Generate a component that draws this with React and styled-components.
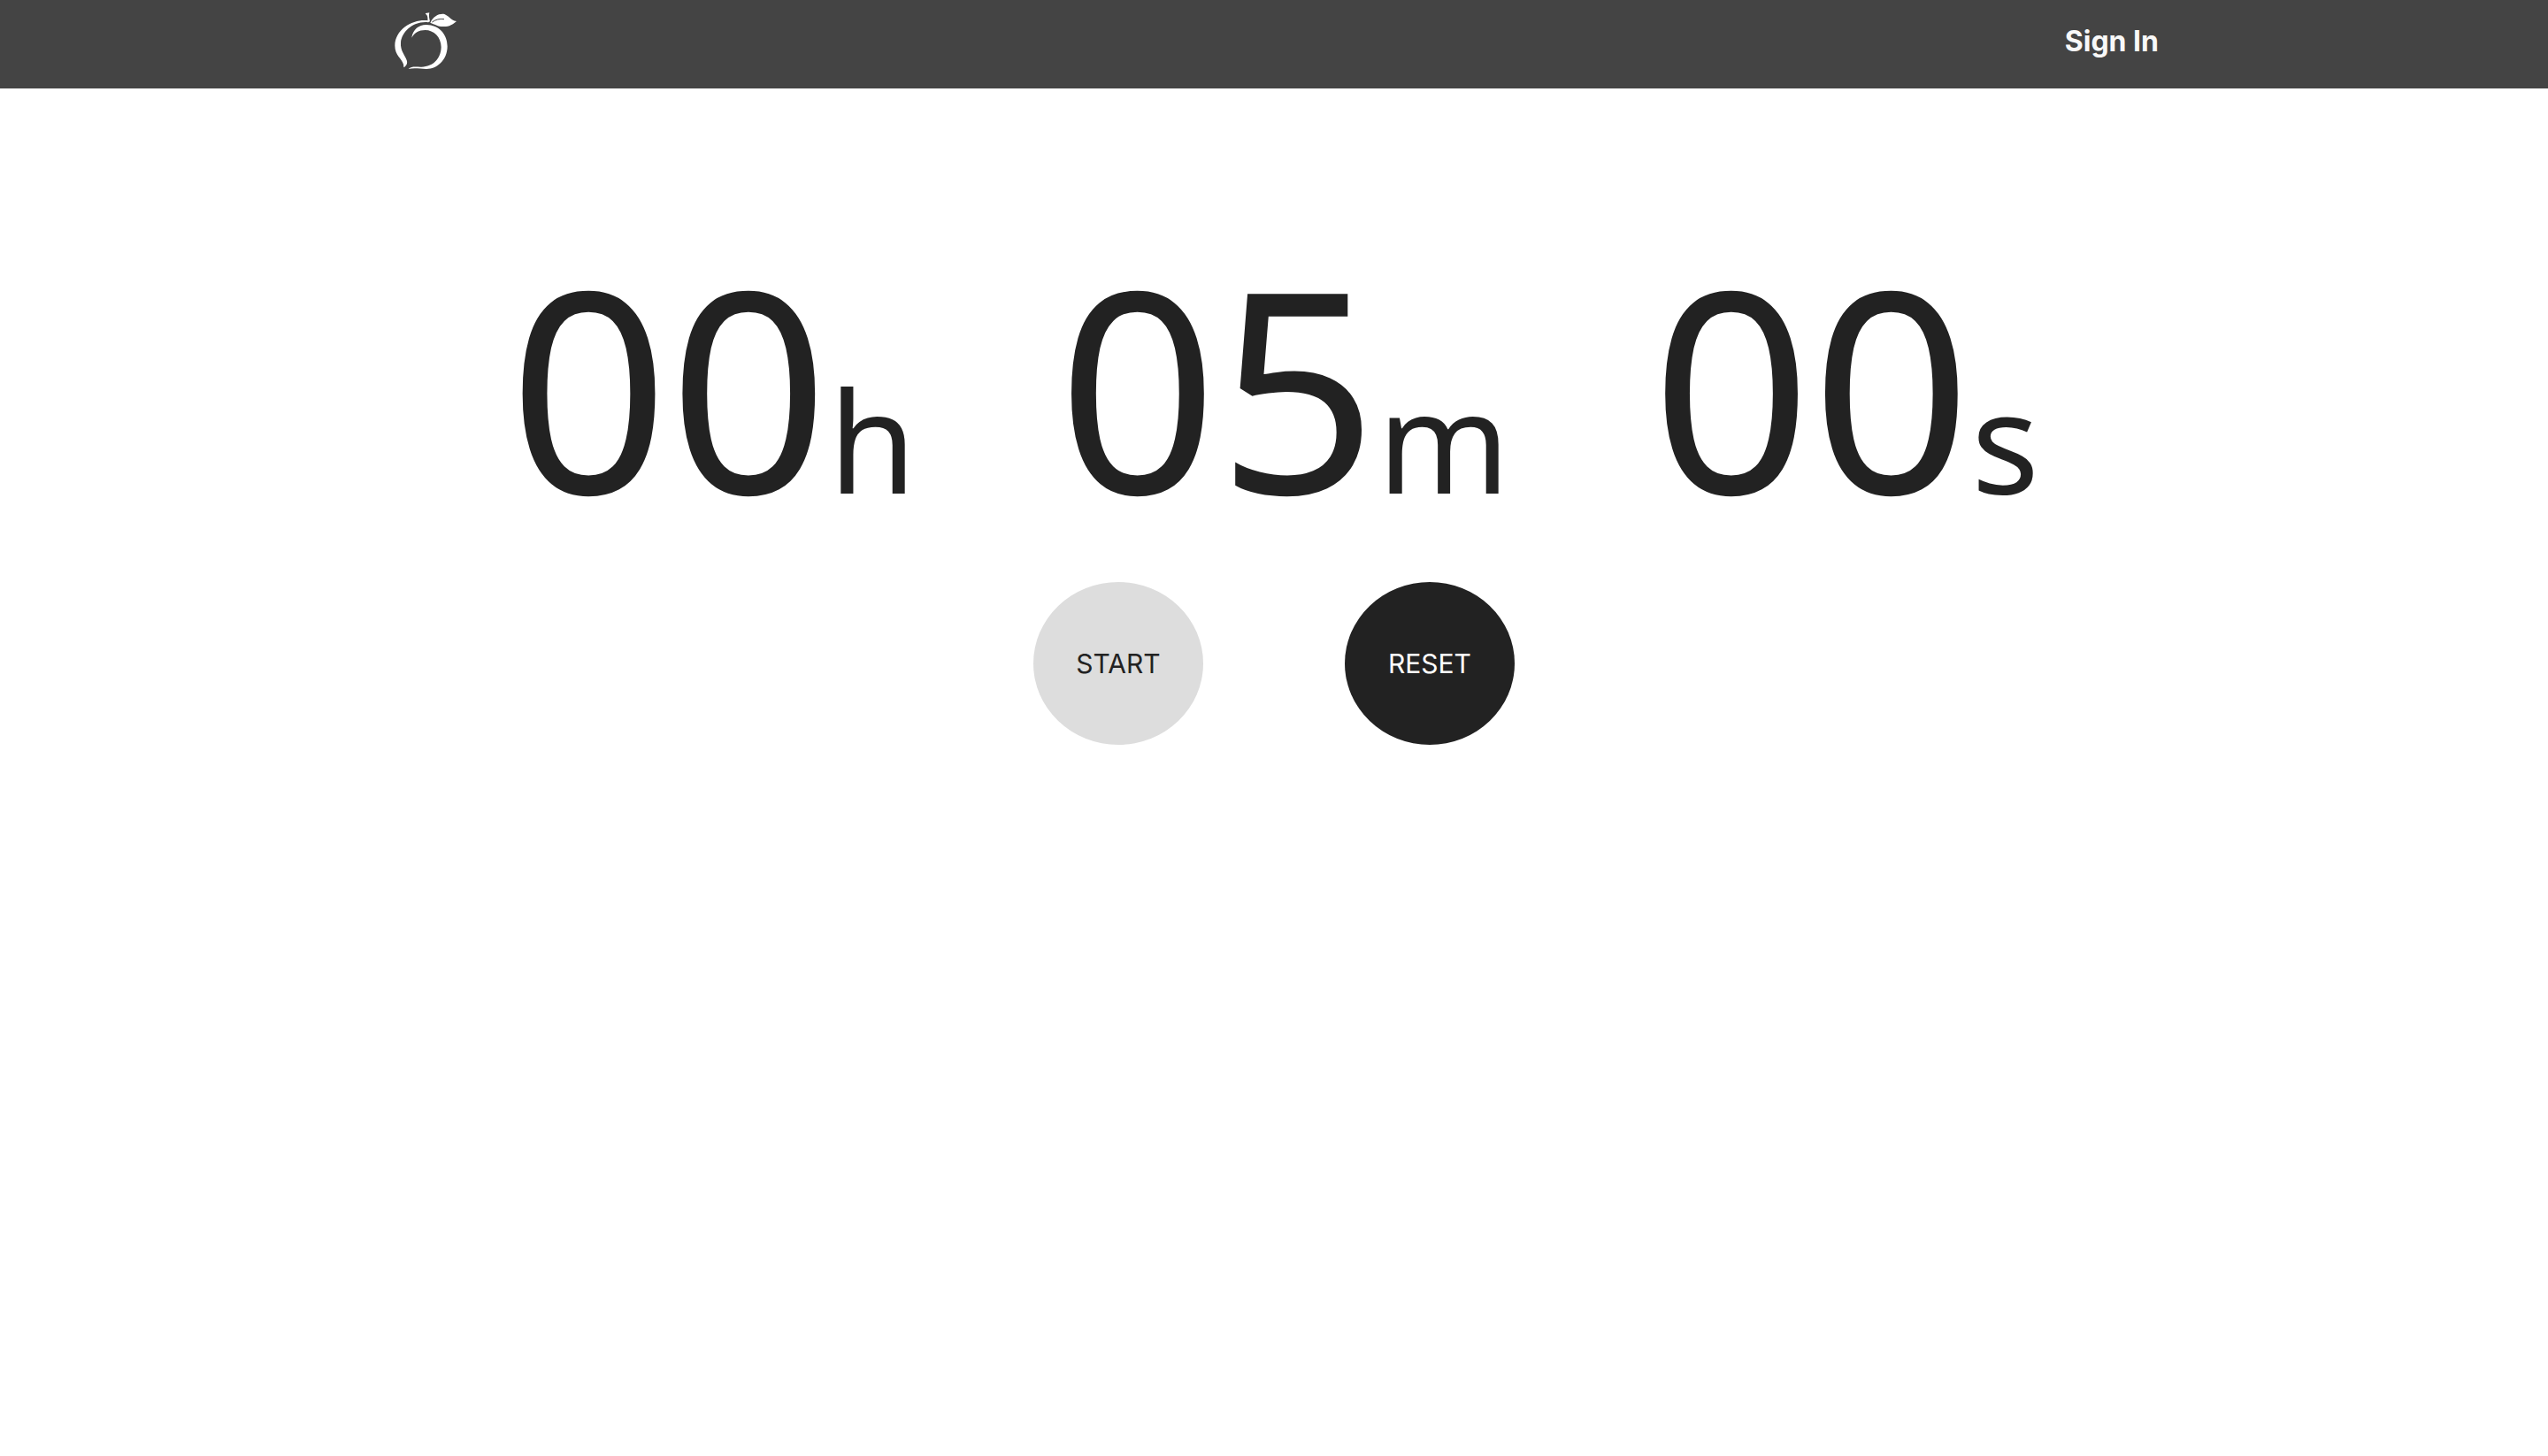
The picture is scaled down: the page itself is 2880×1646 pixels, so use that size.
import React, { useEffect, useState } from "react";
import styled, { createGlobalStyle } from "styled-components";

const START_SECONDS = 300;

const GlobalStyle = createGlobalStyle`
  *, *::before, *::after { box-sizing: border-box; }
  body {
    margin: 0;
    background: #fff;
    color: #222;
    font-family: Inter, "Liberation Sans", sans-serif;
  }
`;

const Header = styled.header`
  padding: 12px 40px 18px;
  background: #444;
`;

const Nav = styled.nav`
  display: flex;
  align-items: center;
  justify-content: space-between;
  max-width: 2000px;
  margin: 0 auto;
`;

const HomeLink = styled.a`
  display: block;
  color: #fff;
`;

const Logo = styled.svg`
  display: block;
  width: 80px;
  height: 70px;
`;

const SignInLink = styled.a`
  color: #f8f8f8;
  font: 700 32px/40px Inter, sans-serif;
  text-decoration: none;
`;

const Main = styled.main`
  display: flex;
  flex-direction: column;
  align-items: center;
  gap: 60px;
  padding-top: 174px;
`;

const Clock = styled.div`
  display: flex;
  gap: 160px;
  font-family: "Noto Sans", sans-serif;
  font-size: 316px;
  line-height: 324px;
`;

const Segment = styled.div`
  display: flex;
  align-items: baseline;
`;

const Unit = styled.span`
  font-size: 160px;
  line-height: 160px;
`;

const Controls = styled.div`
  display: flex;
  gap: 160px;
`;

const RoundButton = styled.button`
  width: 192px;
  height: 184px;
  padding: 0;
  border: 0;
  border-radius: 50%;
  background: ${({ $dark }) => ($dark ? "#222" : "#ddd")};
  color: ${({ $dark }) => ($dark ? "#fff" : "#222")};
  font: 400 30px/40px Inter, sans-serif;
  cursor: pointer;
`;

const pad = (value) => String(value).padStart(2, "0");

function PeachLogo() {
  return (
    <Logo viewBox="30 36 240 210" fill="currentColor" aria-hidden="true">
      <path d="M163 70C118 62 49 95 49 155C49 188 73 198 78 218C79 222 78 226 80 229C88 222 93 215 89 204C83 187 67 172 69 145C72 108 112 70 163 76Z" />
      <path d="M153 45L166 43C163 53 166 63 168 73L160 76C161 62 161 52 153 47Z" />
      <path d="M169 77C180 54 200 45 217 48C234 55 240 71 258 72C240 88 225 91 212 90C195 90 183 82 169 77Z" />
      <path d="M175 75C188 66 200 63 216 65" fill="none" stroke="#444" strokeWidth="3" />
      <path d="M106 128C110 100 130 84 155 84C200 84 227 118 227 157C227 205 190 235 155 234C135 233 112 229 95 234C105 223 125 228 140 227C178 226 205 200 206 160C206 125 180 102 152 102C130 102 115 111 106 128Z" />
    </Logo>
  );
}

export default function App() {
  const [remaining, setRemaining] = useState(START_SECONDS);
  const [running, setRunning] = useState(false);

  useEffect(() => {
    if (!running) return undefined;
    const timer = setInterval(() => setRemaining((s) => Math.max(0, s - 1)), 1000);
    return () => clearInterval(timer);
  }, [running]);

  const reset = () => {
    setRunning(false);
    setRemaining(START_SECONDS);
  };

  const segments = [
    ["h", Math.floor(remaining / 3600)],
    ["m", Math.floor(remaining / 60) % 60],
    ["s", remaining % 60],
  ];

  return (
    <>
      <GlobalStyle />
      <Header>
        <Nav>
          <HomeLink href="#home" aria-label="Home">
            <PeachLogo />
          </HomeLink>
          <SignInLink href="#sign-in">Sign In</SignInLink>
        </Nav>
      </Header>
      <Main>
        <Clock role="timer">
          {segments.map(([unit, value]) => (
            <Segment key={unit}>
              <span>{pad(value)}</span>
              <Unit>{unit}</Unit>
            </Segment>
          ))}
        </Clock>
        <Controls>
          <RoundButton type="button" onClick={() => setRunning(true)}>START</RoundButton>
          <RoundButton type="button" $dark onClick={reset}>RESET</RoundButton>
        </Controls>
      </Main>
    </>
  );
}
